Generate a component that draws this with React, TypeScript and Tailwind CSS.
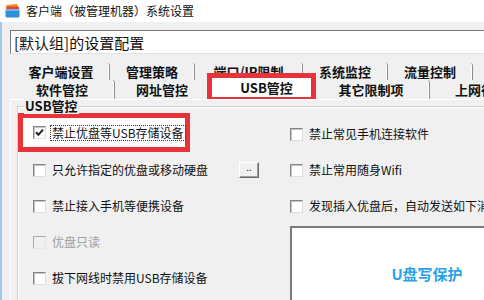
import React from 'react';

const font = "font-['Noto_Sans_CJK_SC','Noto_Sans',sans-serif]";

function Box({ checked, disabled }: { checked?: boolean; disabled?: boolean }) {
  return (
    <span
      className={
        disabled
          ? 'w-[13px] h-[13px] shrink-0 border border-t-[#a8a8a8] border-l-[#a8a8a8] border-b-[#e6e6e6] border-r-[#e6e6e6] bg-[#f0f0f0] flex items-center justify-center'
          : 'w-[13px] h-[13px] shrink-0 border border-t-[#858585] border-l-[#858585] border-b-[#dedede] border-r-[#dedede] bg-white shadow-[inset_1px_1px_0_#c4c4c4] flex items-center justify-center'
      }
    >
      {checked && (
        <svg width="9" height="9" viewBox="0 0 9 9">
          <path d="M1 4.2 L3.4 6.8 L8 1.6" fill="none" stroke="#222" strokeWidth="2" />
        </svg>
      )}
    </span>
  );
}

function Check({ label, checked, disabled, focus }: { label: string; checked?: boolean; disabled?: boolean; focus?: boolean }) {
  return (
    <div className="flex items-center gap-[4px]">
      <Box checked={checked} disabled={disabled} />
      <span
        className={
          (disabled ? 'text-[#a0a0a0] ' : 'text-[#111] ') +
          (focus ? 'border border-dotted border-[#333] px-[1px] leading-[14px]' : 'px-[2px] leading-[14px]') +
          ' text-[12px] whitespace-nowrap'
        }
      >
        {label}
      </span>
    </div>
  );
}

function Tab({ w, label, sep = true }: { w: string; label: string; sep?: boolean }) {
  return (
    <div
      className={
        w +
        ' h-full shrink-0 flex items-center justify-center text-[13px] font-bold text-[#111] whitespace-nowrap ' +
        (sep ? 'border-r border-r-[#8c8c8c] rounded-tr-[3px] shadow-[inset_-1px_0_0_#ffffff]' : '')
      }
    >
      {label}
    </div>
  );
}

export default function App() {
  return (
    <div className={`w-[484px] h-[300px] overflow-hidden bg-[#f0f0f0] ${font}`}>
      {/* title bar */}
      <div className="h-[22px] bg-white flex items-center gap-[6px] pl-[5px]">
        <svg width="15" height="14" viewBox="0 0 15 14">
          <rect x="1" y="0.5" width="12" height="7" rx="1.5" fill="#f08a2c" transform="rotate(-6 7 4)" />
          <rect x="2" y="2.5" width="12" height="5" rx="1" fill="#e8462f" />
          <rect x="0.5" y="5" width="14" height="8.5" rx="1.5" fill="#2f8fd8" />
          <rect x="0.5" y="5" width="14" height="2" rx="1" fill="#6bb7ee" />
        </svg>
        <span className="text-[12px] text-[#111] leading-none">客户端（被管理机器）系统设置</span>
      </div>

      <div className="border-l-2 border-l-[#a3c6ea] h-[278px] pl-[8px] flex flex-col">
        {/* combobox */}
        <div className="mt-[8px] h-[24px] w-[480px] shrink-0 bg-white border border-t-[#7a7a7a] border-l-[#7a7a7a] border-b-[#e3e3e3] border-r-[#e3e3e3] flex items-center pl-[3px]">
          <span className="text-[15px] text-[#111] leading-none">[默认组]的设置配置</span>
        </div>

        {/* tabs */}
        <div className="mt-[9px] shrink-0 w-[474px] overflow-hidden">
          <div className="h-[17px] flex pl-[3px]">
            <Tab w="w-[97px]" label="客户端设置" />
            <Tab w="w-[85px]" label="管理策略" />
            <Tab w="w-[108px]" label="端口/IP限制" />
            <Tab w="w-[85px]" label="系统监控" />
            <Tab w="w-[85px]" label="流量控制" />
            <Tab w="w-[40px]" label="" />
          </div>
          <div className="h-[19px] flex">
            <Tab w="w-[105px]" label="软件管控" />
            <Tab w="w-[95px]" label="网址管控" />
            <div className="w-[103px] h-full shrink-0 relative">
              <div className="absolute -left-[3px] -top-[7px] w-[109px] h-[29px] border-[5px] border-[#e8333b] bg-white z-10 flex items-center justify-center pl-[10px]">
                <span className="text-[13px] font-bold text-[#111] leading-none">USB管控</span>
              </div>
            </div>
            <Tab w="w-[117px]" label="其它限制项" />
            <Tab w="w-[102px]" label="上网行为" sep={false} />
          </div>
        </div>

        {/* panel */}
        <div className="flex-1 border-t border-l border-t-white border-l-white pl-[6px] pt-[6px]">
          <div className="relative h-full border-t border-l border-t-[#cfcfcf] border-l-[#cfcfcf] shadow-[inset_1px_1px_0_#ffffff]">
            <span className="absolute left-[6px] -top-[9px] bg-[#f0f0f0] px-[1px] text-[13px] font-bold text-[#111] leading-[16px]">
              USB管控
            </span>
            <div className="flex pt-[9px]">
              {/* left column */}
              <div className="w-[272px] shrink-0 flex flex-col">
                <div className="h-[36px] flex items-start">
                  <div className="-mt-[3px] w-[172px] h-[39px] border-[5px] border-[#e8333b] bg-white flex items-center pl-[10px]">
                    <Check label="禁止优盘等USB存储设备" checked focus />
                  </div>
                </div>
                <div className="h-[36px] flex items-center pl-[15px] pr-[31px] justify-between">
                  <Check label="只允许指定的优盘或移动硬盘" />
                  <button className="w-[20px] h-[16px] border border-t-white border-l-white border-b-[#6a6a6a] border-r-[#6a6a6a] shadow-[inset_-1px_-1px_0_#a0a0a0] bg-[#f0f0f0] text-[10px] leading-[8px] text-[#222] flex items-start justify-center">
                    ..
                  </button>
                </div>
                <div className="h-[36px] flex items-center pl-[15px]">
                  <Check label="禁止接入手机等便携设备" />
                </div>
                <div className="h-[36px] flex items-center pl-[15px]">
                  <Check label="优盘只读" disabled />
                </div>
                <div className="h-[36px] flex items-center pl-[15px]">
                  <Check label="拔下网线时禁用USB存储设备" />
                </div>
              </div>

              {/* right column */}
              <div className="flex-1 flex flex-col">
                <div className="h-[36px] flex items-center">
                  <Check label="禁止常见手机连接软件" />
                </div>
                <div className="h-[36px] flex items-center">
                  <Check label="禁止常用随身Wifi" />
                </div>
                <div className="h-[36px] flex items-center">
                  <Check label="发现插入优盘后，自动发送如下消息" />
                </div>
                <div className="mt-[2px] w-[272px] h-[92px] bg-white border-t-2 border-l-2 border-t-[#7a7a7a] border-l-[#7a7a7a] flex items-center justify-center">
                  <span className="text-[15px] font-bold text-[#29a3e8] leading-none">U盘写保护</span>
                </div>
              </div>
            </div>
          </div>
        </div>
      </div>
    </div>
  );
}
